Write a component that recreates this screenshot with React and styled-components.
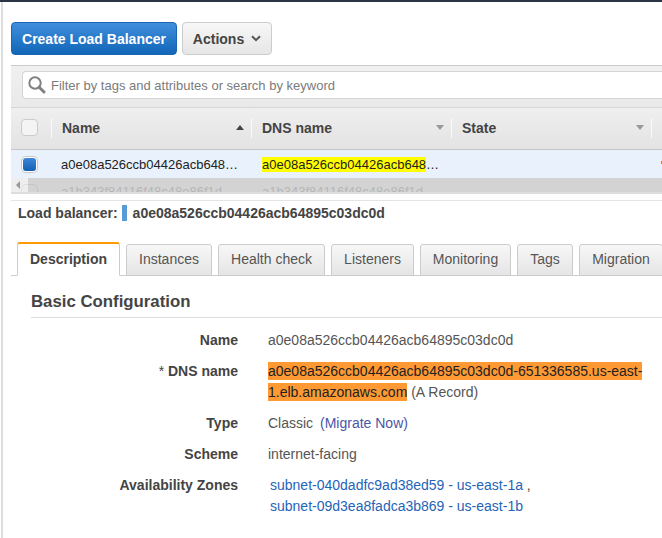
import React from 'react';
import styled, { createGlobalStyle } from 'styled-components';

const GlobalStyle = createGlobalStyle`
  html, body {
    margin: 0;
    padding: 0;
    background: #fff;
    overflow: hidden;
  }
  body {
    font-family: "Liberation Sans", Arial, sans-serif;
    font-size: 14px;
    color: #444;
  }
`;

const Page = styled.div`
  width: 662px;
  height: 538px;
  box-sizing: border-box;
  border-top: 2px solid #2b3644;
  overflow: hidden;
`;

const Shell = styled.div`
  height: 536px;
  margin-left: 1px;
  border-left: 2px solid #ddd;
  padding-left: 8px;
  overflow: hidden;
`;

const Toolbar = styled.div`
  display: flex;
  gap: 5px;
  padding-top: 20px;
  height: 33px;
`;

const PrimaryButton = styled.button`
  width: 166px;
  height: 33px;
  padding: 0;
  border: 1px solid #1a66b0;
  border-radius: 4px;
  background: linear-gradient(#3f8fdc, #1266b8);
  color: #fff;
  font: bold 14px "Liberation Sans", Arial, sans-serif;
`;

const ActionsButton = styled.button`
  width: 90px;
  height: 33px;
  padding: 0;
  display: flex;
  align-items: center;
  justify-content: center;
  gap: 7px;
  border: 1px solid #ccc;
  border-radius: 4px;
  background: linear-gradient(#f7f7f7, #e6e6e6);
  color: #444;
  font: bold 14px "Liberation Sans", Arial, sans-serif;
`;

const FilterBar = styled.div`
  margin-top: 10px;
  height: 36px;
  border-top: 1px solid #ccc;
  background: linear-gradient(#f0f0f0, #e9e9e9);
  padding: 5px 0 0 11px;
`;

const SearchBox = styled.div`
  height: 28px;
  box-sizing: border-box;
  display: flex;
  align-items: center;
  gap: 5px;
  padding-left: 5px;
  background: #fff;
  border: 1px solid #d5d5d5;
  border-right: none;
  border-radius: 4px 0 0 4px;
  color: #7b7b7b;
  font-size: 13px;
  white-space: nowrap;
`;

const HeaderRow = styled.div`
  height: 43px;
  padding-bottom: 2px;
  display: grid;
  grid-template-columns: 40px 200px 200px 200px 1fr;
  align-items: center;
  background: linear-gradient(#efefef, #e3e3e3);
  border-top: 1px solid #d6d6d6;
  border-bottom: 1px solid #c6c6c6;
  box-sizing: border-box;
`;

const CheckCell = styled.div`
  display: flex;
  justify-content: flex-end;
  align-items: center;
  height: 100%;
  padding-right: 13px;
`;

const EmptyCheck = styled.span`
  width: 17px;
  height: 17px;
  box-sizing: border-box;
  border: 1px solid #ccc;
  border-radius: 4px;
  background: #f4f4f4;
  display: block;
`;

const HeaderCell = styled.div`
  height: 20px;
  display: flex;
  align-items: center;
  justify-content: space-between;
  padding: 0 7px 0 10px;
  border-left: 1px solid #fafafa;
  font-weight: bold;
  font-size: 14px;
  color: #444;
`;

const SortArrow = styled.span`
  width: 0;
  height: 0;
  border-left: 4px solid transparent;
  border-right: 4px solid transparent;
  ${(p) => (p.$up ? 'border-bottom: 5px solid #444;' : 'border-top: 5px solid #999;')}
`;

const TableBody = styled.div`
  position: relative;
  height: 42px;
  overflow: hidden;
  border-bottom: 2px solid #ddd;
`;

const DataRow = styled.div`
  height: 28px;
  display: grid;
  grid-template-columns: 40px 200px 200px 1fr;
  align-items: center;
  background: ${(p) => (p.$selected ? '#e9f1fc' : '#fff')};
  font-size: 13px;
  color: ${(p) => (p.$selected ? '#222' : '#888')};
  white-space: nowrap;
`;

const RowCheck = styled.span`
  width: 13px;
  height: 13px;
  margin-right: 2px;
  border-radius: 3px;
  box-shadow: 0 0 0 1px #fff, 0 0 0 2px #c8c8c8;
  background: ${(p) => (p.$on ? 'linear-gradient(#3f85d8, #1360b5)' : 'transparent')};
  display: block;
`;

const NameCell = styled.div`
  padding-left: 10px;
  margin-top: ${(p) => (p.$ghost ? '-2px' : '0')};
`;

const Mark = styled.span`
  background: #ffff00;
`;

const MarkCell = styled.div`
  padding-left: 11px;
  margin-top: ${(p) => (p.$ghost ? '-2px' : '0')};
`;

// sliver of the next column's caret, the rest is past the window edge
const RowFlag = styled.span`
  justify-self: end;
  width: 1px;
  height: 3px;
  margin-top: -4px;
  background: #c98a1a;
`;

const HScroll = styled.div`
  position: absolute;
  left: 0;
  right: 0;
  top: 28px;
  height: 14px;
  display: flex;
`;

const ScrollCap = styled.div`
  width: 17px;
  display: flex;
  align-items: center;
  background: rgba(232, 232, 232, 0.75);
`;

const ScrollLeft = styled.span`
  margin-left: 5px;
  width: 0;
  height: 0;
  border-top: 4px solid transparent;
  border-bottom: 4px solid transparent;
  border-right: 4px solid #999;
`;

const ScrollThumb = styled.div`
  flex: 1;
  background: rgba(196, 196, 196, 0.75);
`;

const Divider = styled.div`
  margin-top: 6px;
  border-top: 1px solid #e4e4e4;
`;

const LbTitle = styled.div`
  display: flex;
  align-items: center;
  gap: 4px;
  margin: 4px 0 0 7px;
  height: 16px;
  font-weight: bold;
  font-size: 14px;
  color: #444;
  white-space: nowrap;
`;

const Swatch = styled.span`
  width: 5px;
  height: 16px;
  background: #5b9bd5;
  margin-right: 2px;
`;

const TabStrip = styled.div`
  display: flex;
  align-items: flex-end;
  gap: 6px;
  margin-top: 22px;
  padding-left: 6px;
  height: 33px;
  border-bottom: 1px solid #ccc;
  box-sizing: border-box;
`;

const Tab = styled.div`
  box-sizing: border-box;
  width: ${(p) => p.$w}px;
  flex: none;
  height: ${(p) => (p.$active ? '34px' : '32px')};
  margin-bottom: -1px;
  padding-bottom: 2px;
  display: flex;
  align-items: center;
  justify-content: center;
  border: 1px solid #ccc;
  border-radius: 3px 3px 0 0;
  font-size: 14px;
  color: #555;
  ${(p) =>
    p.$active
      ? `background: #fff; border-top: 2px solid #f90; border-bottom-color: #fff; font-weight: bold; color: #444;`
      : `background: linear-gradient(#f7f7f7, #e5e5e5);`}
`;

const Panel = styled.div`
  padding: 16px 0 0 20px;
`;

const SectionTitle = styled.h2`
  margin: 0;
  height: 25px;
  font-size: 16.8px;
  line-height: 20px;
  font-weight: bold;
  color: #444;
  border-bottom: 1px solid #ddd;
`;

const Details = styled.div`
  display: grid;
  grid-template-columns: 207px 1fr;
  column-gap: 30px;
  row-gap: 10px;
  padding-top: 12px;
  font-size: 14px;
  line-height: 21px;
`;

const Term = styled.div`
  text-align: right;
  font-weight: bold;
  color: #444;
`;

const Star = styled.span`
  font-weight: normal;
`;

const Value = styled.div`
  color: #555;
`;

const DnsMark = styled.span`
  background: #ff9933;
  color: #222;
  padding: 1px 0;
`;

const BlueLink = styled.a`
  color: ${(p) => (p.$purple ? '#4a55a8' : '#1f64b8')};
  margin-left: ${(p) => (p.$purple ? '3px' : '0')};
  text-decoration: none;
`;

const ZoneList = styled.div`
  padding-left: 2px;
`;

const SearchIcon = () => (
  <svg width="18" height="18" viewBox="0 0 18 18" fill="none">
    <circle cx="7" cy="7" r="5.7" stroke="#808080" strokeWidth="2" />
    <path d="M11.2 11.2 L16 16" stroke="#808080" strokeWidth="3" strokeLinecap="round" />
  </svg>
);

const Chevron = () => (
  <svg width="10" height="7" viewBox="0 0 10 7" fill="none">
    <path d="M1 1.2 L5 5.2 L9 1.2" stroke="#555" strokeWidth="2" />
  </svg>
);

const tabs = [
  ['Description', 103],
  ['Instances', 86],
  ['Health check', 107],
  ['Listeners', 83],
  ['Monitoring', 91],
  ['Tags', 56],
  ['Migration', 84],
];

export default function App() {
  return (
    <Page>
      <GlobalStyle />
      <Shell>
        <Toolbar>
          <PrimaryButton>Create Load Balancer</PrimaryButton>
          <ActionsButton>
            Actions <Chevron />
          </ActionsButton>
        </Toolbar>

        <FilterBar>
          <SearchBox>
            <SearchIcon />
            Filter by tags and attributes or search by keyword
          </SearchBox>
        </FilterBar>

        <HeaderRow>
          <CheckCell>
            <EmptyCheck />
          </CheckCell>
          <HeaderCell>
            Name <SortArrow $up />
          </HeaderCell>
          <HeaderCell>
            DNS name <SortArrow />
          </HeaderCell>
          <HeaderCell>
            State <SortArrow />
          </HeaderCell>
          <HeaderCell />
        </HeaderRow>

        <TableBody>
          <DataRow $selected>
            <CheckCell>
              <RowCheck $on />
            </CheckCell>
            <NameCell>a0e08a526ccb04426acb648…</NameCell>
            <MarkCell>
              <Mark>a0e08a526ccb04426acb648</Mark>…
            </MarkCell>
            <RowFlag />
          </DataRow>
          <DataRow>
            <CheckCell>
              <RowCheck />
            </CheckCell>
            <NameCell $ghost>a1b343f84116f48c48e86f1d</NameCell>
            <MarkCell $ghost>a1b343f84116f48c48e86f1d</MarkCell>
          </DataRow>
          <HScroll>
            <ScrollCap>
              <ScrollLeft />
            </ScrollCap>
            <ScrollThumb />
          </HScroll>
        </TableBody>

        <Divider />
        <LbTitle>
          Load balancer: <Swatch /> a0e08a526ccb04426acb64895c03dc0d
        </LbTitle>

        <TabStrip>
          {tabs.map(([label, w], i) => (
            <Tab key={label} $w={w} $active={i === 0}>
              {label}
            </Tab>
          ))}
        </TabStrip>

        <Panel>
          <SectionTitle>Basic Configuration</SectionTitle>
          <Details>
            <Term>Name</Term>
            <Value>a0e08a526ccb04426acb64895c03dc0d</Value>

            <Term>
              <Star>* </Star>DNS name
            </Term>
            <Value>
              <DnsMark>a0e08a526ccb04426acb64895c03dc0d-651336585.us-east-1.elb.amazonaws.com</DnsMark> (A Record)
            </Value>

            <Term>Type</Term>
            <Value>
              Classic <BlueLink $purple>(Migrate Now)</BlueLink>
            </Value>

            <Term>Scheme</Term>
            <Value>internet-facing</Value>

            <Term>Availability Zones</Term>
            <ZoneList>
              <BlueLink>subnet-040dadfc9ad38ed59 - us-east-1a</BlueLink> ,
              <br />
              <BlueLink>subnet-09d3ea8fadca3b869 - us-east-1b</BlueLink>
            </ZoneList>
          </Details>
        </Panel>
      </Shell>
    </Page>
  );
}
